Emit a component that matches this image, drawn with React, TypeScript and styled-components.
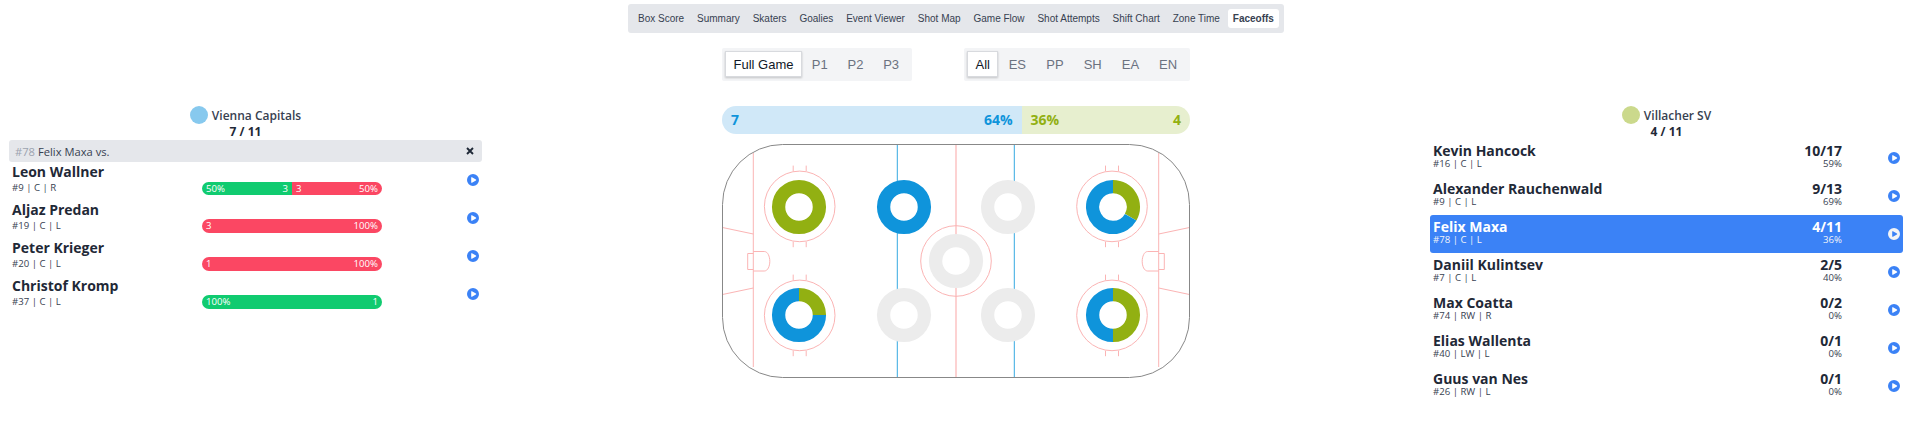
import React from "react";
import styled, { createGlobalStyle } from "styled-components";

const BLUE = "#0f94db";
const GREEN = "#92b012";
const PINK = "#fbb4b4";

const tabs = ["Box Score", "Summary", "Skaters", "Goalies", "Event Viewer", "Shot Map", "Game Flow", "Shot Attempts", "Shift Chart", "Zone Time", "Faceoffs"];
const periods = ["Full Game", "P1", "P2", "P3"];
const strengths = ["All", "ES", "PP", "SH", "EA", "EN"];

const opponents = [
  { name: "Leon Wallner", meta: "#9 | C | R", wins: 3, losses: 3 },
  { name: "Aljaz Predan", meta: "#19 | C | L", wins: 0, losses: 3 },
  { name: "Peter Krieger", meta: "#20 | C | L", wins: 0, losses: 1 },
  { name: "Christof Kromp", meta: "#37 | C | L", wins: 1, losses: 0 },
];

const centers = [
  { name: "Kevin Hancock", meta: "#16 | C | L", score: "10/17", pct: "59%" },
  { name: "Alexander Rauchenwald", meta: "#9 | C | L", score: "9/13", pct: "69%" },
  { name: "Felix Maxa", meta: "#78 | C | L", score: "4/11", pct: "36%", active: true },
  { name: "Daniil Kulintsev", meta: "#7 | C | L", score: "2/5", pct: "40%" },
  { name: "Max Coatta", meta: "#74 | RW | R", score: "0/2", pct: "0%" },
  { name: "Elias Wallenta", meta: "#40 | LW | L", score: "0/1", pct: "0%" },
  { name: "Guus van Nes", meta: "#26 | RW | L", score: "0/1", pct: "0%" },
];

const GlobalStyle = createGlobalStyle`
  html, body {
    margin: 0;
    padding: 0;
    background: #fff;
    overflow: hidden;
  }
  body {
    font-family: "Open Sans", "Liberation Sans", sans-serif;
    color: #1f2937;
  }
`;

const Page = styled.div`
  width: 1915px;
  height: 432px;
  padding: 4px 12px 0 9px;
  box-sizing: border-box;
`;

const Nav = styled.nav`
  width: 656px;
  height: 29px;
  margin: 0 auto;
  padding: 0 5px;
  box-sizing: border-box;
  display: flex;
  align-items: center;
  justify-content: space-between;
  background: #e5e7eb;
  border-radius: 3px;
  font-family: "Liberation Sans", Arial, sans-serif;
`;

const Tab = styled.span<{ $active?: boolean }>`
  height: 19px;
  padding: 0 5px;
  display: flex;
  align-items: center;
  font-size: 10px;
  font-weight: ${(p) => (p.$active ? 700 : 400)};
  color: #374151;
  background: ${(p) => (p.$active ? "#fff" : "transparent")};
  border-radius: 3px;
`;

const Filters = styled.div`
  width: 468px;
  margin: 15px auto 0;
  display: flex;
  justify-content: space-between;
  font-family: "Liberation Sans", Arial, sans-serif;
`;

const FilterGroup = styled.div<{ $width: number }>`
  width: ${(p) => p.$width}px;
  height: 33px;
  padding: 3px;
  box-sizing: border-box;
  display: flex;
  background: #f3f4f6;
  border-radius: 2px;
`;

const FilterButton = styled.span<{ $active?: boolean }>`
  flex: ${(p) => (p.$active ? "0 0 auto" : "1 1 0")};
  height: 26px;
  padding: 0 7.5px;
  box-sizing: border-box;
  display: flex;
  align-items: center;
  justify-content: center;
  font-size: 13px;
  color: ${(p) => (p.$active ? "#111827" : "#6b7280")};
  background: ${(p) => (p.$active ? "#fff" : "transparent")};
  border: ${(p) => (p.$active ? "1px solid #d8dade" : "none")};
  box-shadow: ${(p) => (p.$active ? "0 1px 2px rgba(0,0,0,.2)" : "none")};
`;

const Columns = styled.div`
  margin-top: 25px;
  display: flex;
  justify-content: space-between;
  align-items: flex-start;
`;

const Side = styled.section`
  width: 473px;
`;

const Center = styled.section`
  width: 468px;
`;

const TeamHeader = styled.div`
  height: 34px;
  display: flex;
  flex-direction: column;
  align-items: center;
  gap: 1px;
  font-size: 12px;
  font-weight: 600;
  color: #374151;
`;

const TeamLine = styled.div`
  height: 18px;
  display: flex;
  align-items: center;
  gap: 4px;
`;

const TeamDot = styled.span<{ $color: string }>`
  width: 18px;
  height: 18px;
  border-radius: 50%;
  background: ${(p) => p.$color};
`;

const Count = styled.div`
  line-height: 14px;
  height: 14px;
  font-weight: 700;
  color: #1f2937;
`;

const SelectedBar = styled.div`
  height: 22px;
  padding: 0 8px 0 6px;
  display: flex;
  align-items: center;
  justify-content: space-between;
  background: #e5e7eb;
  border-radius: 3px;
  font-size: 11.2px;
  color: #374151;
`;

const Muted = styled.span`
  color: #9ca3af;
`;

const OpponentRow = styled.div`
  height: 38px;
  padding: 1px 3px 0;
  box-sizing: border-box;
  display: grid;
  grid-template-columns: 190px 180px 1fr;
  align-items: start;
`;

const PlayerName = styled.div<{ $active?: boolean }>`
  font-size: 14px;
  line-height: 18px;
  font-weight: 700;
  color: ${(p) => (p.$active ? "#fff" : "#1f2937")};
`;

const PlayerMeta = styled.div<{ $active?: boolean }>`
  font-size: 9.6px;
  line-height: 14px;
  font-weight: 400;
  color: ${(p) => (p.$active ? "#f3f4f6" : "#374151")};
`;

const SplitBar = styled.div<{ $split: boolean }>`
  height: ${(p) => (p.$split ? 13 : 14)}px;
  margin-top: ${(p) => (p.$split ? 19 : 18)}px;
  display: flex;
  border-radius: 7px;
  overflow: hidden;
  font-size: 9.6px;
  line-height: 14px;
  color: #fff;
`;

const SplitPart = styled.div<{ $color: string }>`
  min-width: 0;
  padding: 0 4px;
  box-sizing: border-box;
  display: flex;
  justify-content: space-between;
  background: ${(p) => p.$color};
`;

const LeftPlay = styled.div`
  display: flex;
  justify-content: flex-end;
  margin-top: 11px;
  color: #3b82f6;
`;

const RightPlay = styled.div<{ $active?: boolean }>`
  display: flex;
  justify-content: flex-end;
  color: ${(p) => (p.$active ? "#f3f4f6" : "#3b82f6")};
`;

const TotalBar = styled.div`
  height: 28px;
  display: flex;
  border-radius: 14px;
  overflow: hidden;
  font-size: 14px;
  font-weight: 700;
  line-height: 28px;
`;

const TotalPart = styled.div<{ $bg: string; $fg: string; $width: number }>`
  width: ${(p) => p.$width}%;
  padding: 0 9px;
  box-sizing: border-box;
  display: flex;
  justify-content: space-between;
  background: ${(p) => p.$bg};
  color: ${(p) => p.$fg};
`;

const Rink = styled.svg`
  display: block;
  margin: 9px 0 0 -1px;
`;

const CenterList = styled.div`
  margin-top: -1px;
`;

const CenterRow = styled.div<{ $active?: boolean }>`
  height: 38px;
  padding: 0 3px;
  box-sizing: border-box;
  display: grid;
  grid-template-columns: 409px 1fr;
  align-items: center;
  background: ${(p) => (p.$active ? "#3b82f6" : "transparent")};
  border-radius: 3px;
`;

const CenterText = styled.div`
  height: 38px;
  padding-top: 4px;
  box-sizing: border-box;
  display: flex;
  justify-content: space-between;
`;

const CenterName = styled(PlayerName)`
  line-height: 16px;
`;

const CenterMeta = styled(PlayerMeta)`
  line-height: 10px;
`;

const ScoreCell = styled.div`
  text-align: right;
`;

const CloseIcon = () => (
  <svg width="8" height="8" viewBox="0 0 8 8" fill="none" stroke="#1f2937" strokeWidth="1.9">
    <path d="M1 1l6 6M7 1L1 7" />
  </svg>
);

const PlayIcon = () => (
  <svg width="12" height="12" viewBox="0 0 20 20" fill="currentColor">
    <path
      fillRule="evenodd"
      d="M10 0a10 10 0 1 0 0 20 10 10 0 0 0 0-20ZM7.3 5.6a.9.9 0 0 1 1-.1l6.6 3.7a.9.9 0 0 1 0 1.6l-6.6 3.7A.9.9 0 0 1 7 13.7V6.3c0-.3.1-.5.3-.7Z"
    />
  </svg>
);

function arc(cx: number, cy: number, r: number, from: number, to: number) {
  const a = ((from - 90) * Math.PI) / 180;
  const b = ((to - 90) * Math.PI) / 180;
  const large = to - from > 180 ? 1 : 0;
  return `M${cx + r * Math.cos(a)} ${cy + r * Math.sin(a)}A${r} ${r} 0 ${large} 1 ${cx + r * Math.cos(b)} ${cy + r * Math.sin(b)}`;
}

// green runs clockwise from 12 o'clock, blue takes the rest
const Donut = ({ x, y, green, blue }: { x: number; y: number; green: number; blue: number }) => {
  const total = green + blue;
  const r = 20.4;
  const sw = 13.3;
  if (total === 0) return <circle cx={x} cy={y} r={r} fill="#fff" stroke="#ececec" strokeWidth={sw} />;
  if (blue === 0) return <circle cx={x} cy={y} r={r} fill="#fff" stroke={GREEN} strokeWidth={sw} />;
  if (green === 0) return <circle cx={x} cy={y} r={r} fill="#fff" stroke={BLUE} strokeWidth={sw} />;
  const cut = (green / total) * 360;
  return (
    <g fill="none" strokeWidth={sw}>
      <path d={arc(x, y, r, 0, cut)} stroke={GREEN} />
      <path d={arc(x, y, r, cut, 360)} stroke={BLUE} />
    </g>
  );
};

const FaceoffCircle = ({ x, y }: { x: number; y: number }) => (
  <g fill="none" stroke={PINK} strokeWidth="1">
    <circle cx={x} cy={y} r="35.3" />
    {[-6.5, 6.5].map((dx) => (
      <g key={dx}>
        <path d={`M${x + dx} ${y - 35.3}v-5.5`} />
        <path d={`M${x + dx} ${y + 35.3}v5.5`} />
      </g>
    ))}
  </g>
);

// viewBox is in page pixels so the numbers read straight off the screenshot
const RinkDrawing = () => (
  <Rink width="471" height="236" viewBox="721 143 471 236">
    <path d="M753.3 153v214" fill="none" stroke={PINK} strokeWidth="1" />
    <path d="M1158.7 153v214" fill="none" stroke={PINK} strokeWidth="1" />
    <path d="M956 145v232" fill="none" stroke={PINK} strokeWidth="1.2" />
    <path d="M897.3 145v232M1014.3 145v232" fill="none" stroke="#36a9e1" strokeWidth="1" />
    <g fill="none" stroke={PINK} strokeWidth="1">
      <path d="M722.5 227.5l30.8 6.5M722.5 294.5l30.8-6.5" />
      <path d="M1189.5 227.5l-30.8 6.5M1189.5 294.5l-30.8-6.5" />
      <path d="M753.3 251.5h11c3.5 0 5.5 5 5.5 9.8s-2 9.7-5.5 9.7h-11M753.3 253.5h-5.6v16h5.6" />
      <path d="M1158.7 251.5h-11c-3.5 0-5.5 5-5.5 9.8s2 9.7 5.5 9.7h11M1158.7 253.5h5.6v16h-5.6" />
    </g>
    <FaceoffCircle x={799.7} y={206.4} />
    <FaceoffCircle x={799.7} y={315.4} />
    <FaceoffCircle x={1112} y={206.4} />
    <FaceoffCircle x={1112} y={315.4} />
    <circle cx="956" cy="261" r="35.3" fill="none" stroke={PINK} strokeWidth="1" />
    <Donut x={799} y={207} green={1} blue={0} />
    <Donut x={904} y={207} green={0} blue={1} />
    <Donut x={1008} y={207} green={0} blue={0} />
    <Donut x={956} y={261} green={0} blue={0} />
    <Donut x={799} y={315} green={1} blue={3} />
    <Donut x={904} y={315} green={0} blue={0} />
    <Donut x={1008} y={315} green={0} blue={0} />
    <Donut x={1113} y={207} green={1} blue={2} />
    <Donut x={1113} y={315} green={1} blue={1} />
    <rect x="722.5" y="144.5" width="467" height="233" rx="60" fill="none" stroke="#888" strokeWidth="1" />
  </Rink>
);

export default function App() {
  return (
    <Page>
      <GlobalStyle />
      <Nav>
        {tabs.map((t) => (
          <Tab key={t} $active={t === "Faceoffs"}>
            {t}
          </Tab>
        ))}
      </Nav>
      <Filters>
        <FilterGroup $width={190}>
          {periods.map((p, i) => (
            <FilterButton key={p} $active={i === 0}>
              {p}
            </FilterButton>
          ))}
        </FilterGroup>
        <FilterGroup $width={226}>
          {strengths.map((s, i) => (
            <FilterButton key={s} $active={i === 0}>
              {s}
            </FilterButton>
          ))}
        </FilterGroup>
      </Filters>
      <Columns>
        <Side>
          <TeamHeader>
            <TeamLine>
              <TeamDot $color="#87c9ee" />
              Vienna Capitals
            </TeamLine>
            <Count>7 / 11</Count>
          </TeamHeader>
          <SelectedBar>
            <span>
              <Muted>#78</Muted> Felix Maxa vs.
            </span>
            <CloseIcon />
          </SelectedBar>
          {opponents.map((o) => {
            const total = o.wins + o.losses;
            return (
              <OpponentRow key={o.name}>
                <div>
                  <PlayerName>{o.name}</PlayerName>
                  <PlayerMeta>{o.meta}</PlayerMeta>
                </div>
                <SplitBar $split={o.wins > 0 && o.losses > 0}>
                  {o.wins > 0 && (
                    <SplitPart $color="#10cb70" style={{ width: `${(o.wins / total) * 100}%` }}>
                      <span>{Math.round((o.wins / total) * 100)}%</span>
                      <span>{o.wins}</span>
                    </SplitPart>
                  )}
                  {o.losses > 0 && (
                    <SplitPart $color="#fb4763" style={{ width: `${(o.losses / total) * 100}%` }}>
                      <span>{o.losses}</span>
                      <span>{Math.round((o.losses / total) * 100)}%</span>
                    </SplitPart>
                  )}
                </SplitBar>
                <LeftPlay>
                  <PlayIcon />
                </LeftPlay>
              </OpponentRow>
            );
          })}
        </Side>
        <Center>
          <TotalBar>
            <TotalPart $bg="#d0e8f8" $fg={BLUE} $width={64}>
              <span>7</span>
              <span>64%</span>
            </TotalPart>
            <TotalPart $bg="#e7efcf" $fg={GREEN} $width={36}>
              <span>36%</span>
              <span>4</span>
            </TotalPart>
          </TotalBar>
          <RinkDrawing />
        </Center>
        <Side>
          <TeamHeader>
            <TeamLine>
              <TeamDot $color="#cbd98c" />
              Villacher SV
            </TeamLine>
            <Count>4 / 11</Count>
          </TeamHeader>
          <CenterList>
            {centers.map((c) => (
              <CenterRow key={c.name} $active={c.active}>
                <CenterText>
                  <div>
                    <CenterName $active={c.active}>{c.name}</CenterName>
                    <CenterMeta $active={c.active}>{c.meta}</CenterMeta>
                  </div>
                  <ScoreCell>
                    <CenterName $active={c.active}>{c.score}</CenterName>
                    <CenterMeta $active={c.active}>{c.pct}</CenterMeta>
                  </ScoreCell>
                </CenterText>
                <RightPlay $active={c.active}>
                  <PlayIcon />
                </RightPlay>
              </CenterRow>
            ))}
          </CenterList>
        </Side>
      </Columns>
    </Page>
  );
}
